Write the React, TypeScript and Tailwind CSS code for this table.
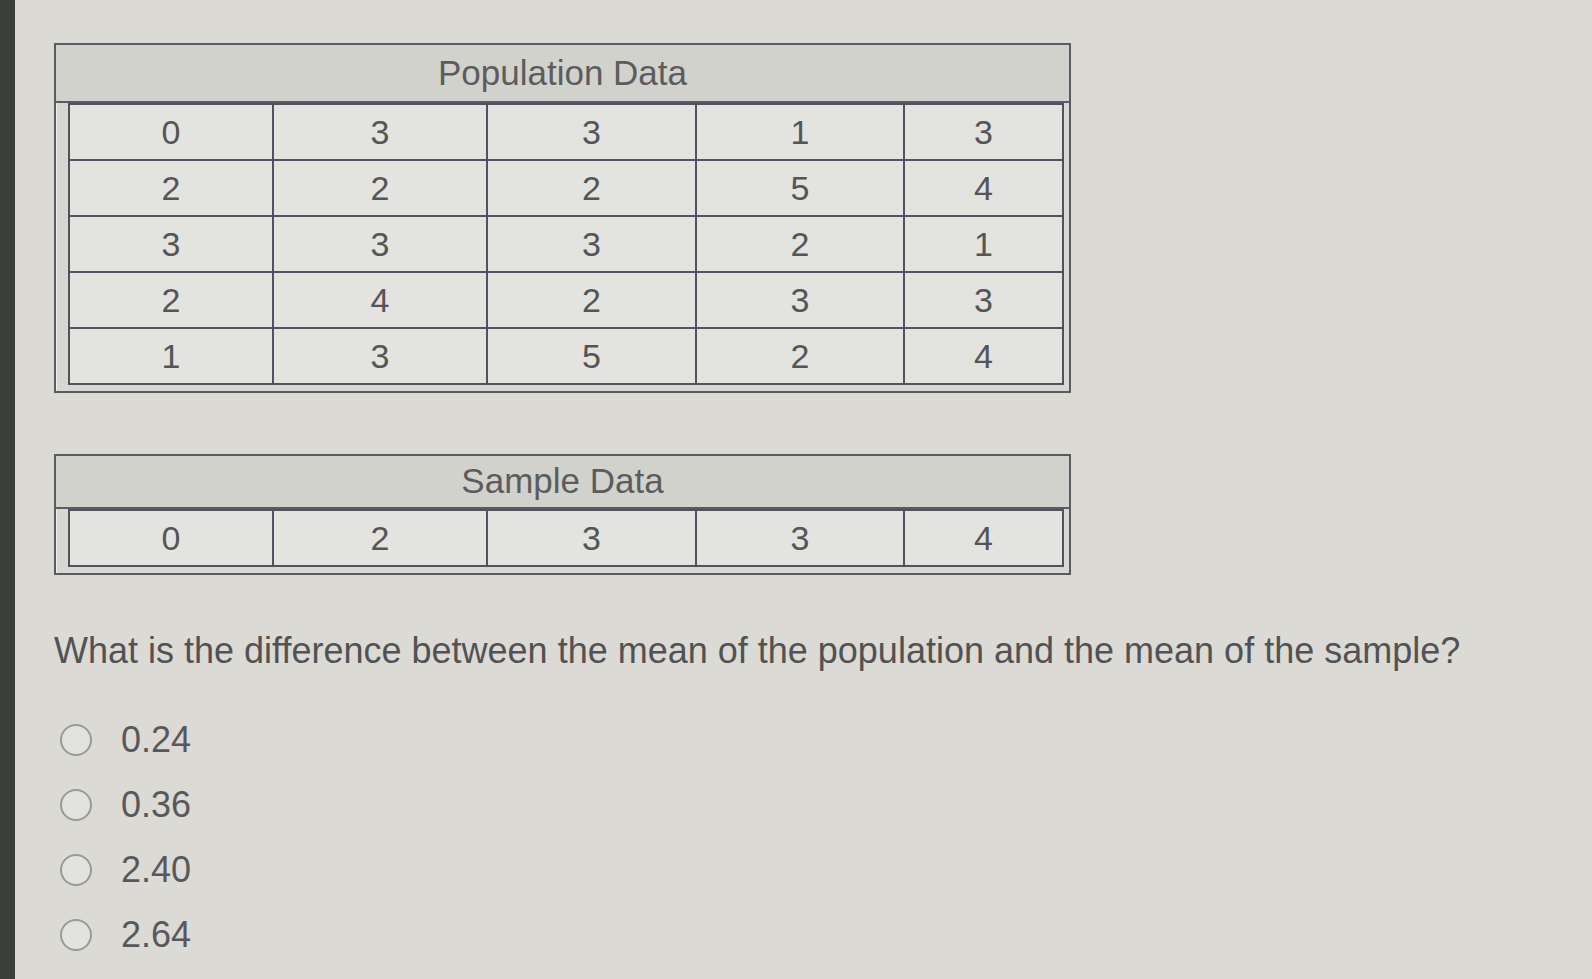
import React from 'react';

const population = [
  [0, 3, 3, 1, 3],
  [2, 2, 2, 5, 4],
  [3, 3, 3, 2, 1],
  [2, 4, 2, 3, 3],
  [1, 3, 5, 2, 4],
];

const sample = [0, 2, 3, 3, 4];

const options = ['0.24', '0.36', '2.40', '2.64'];

const DataTable: React.FC<{ title: string; rows: number[][]; headerH: string }> = ({ title, rows, headerH }) => (
  <div className="w-[1017px] border-2 border-[#5a5b62] bg-[#d8d8d3]">
    <div
      className={`${headerH} flex items-center justify-center bg-[#d2d2cd] border-b-2 border-[#5a5b62] text-[35px] text-[#5c5c5e]`}
    >
      {title}
    </div>
    <div className="pl-[11px] pr-[5px] pb-[6px] border-l border-[#f0f0ec]">
      <div className="grid grid-cols-[202px_212px_207px_206px_1fr] gap-[2px] bg-[#505260] p-[2px]">
        {rows.flatMap((row, r) =>
          row.map((v, c) => (
            <div
              key={`${r}-${c}`}
              className="h-[54px] flex items-center justify-center bg-[#e3e3df] text-[34px] text-[#555557]"
            >
              {v}
            </div>
          ))
        )}
      </div>
    </div>
  </div>
);

export default function App() {
  return (
    <div
      className="flex min-h-screen w-full bg-[#dbdad4]"
      style={{ fontFamily: '"Liberation Sans", Arial, sans-serif' }}
    >
      {/* monitor bezel */}
      <div className="w-[15px] shrink-0 bg-[#3c3f39]" />

      <div className="flex-1 flex flex-col pl-[39px] pt-[43px]">
        <DataTable title="Population Data" rows={population} headerH="h-[58px]" />

        <div className="mt-[61px]">
          <DataTable title="Sample Data" rows={[sample]} headerH="h-[53px]" />
        </div>

        <p className="mt-[54px] text-[36px] leading-[44px] text-[#525254]">
          What is the difference between the mean of the population and the mean of the sample?
        </p>

        <div className="mt-[34px] flex flex-col">
          {options.map((o) => (
            <label key={o} className="h-[65px] flex items-center gap-[29px] pl-[6px] cursor-pointer">
              <span className="w-[32px] h-[32px] rounded-full border-2 border-[#999997] bg-[#e2e2de]" />
              <span className="text-[36px] text-[#58585a]">{o}</span>
            </label>
          ))}
        </div>
      </div>
    </div>
  );
}
